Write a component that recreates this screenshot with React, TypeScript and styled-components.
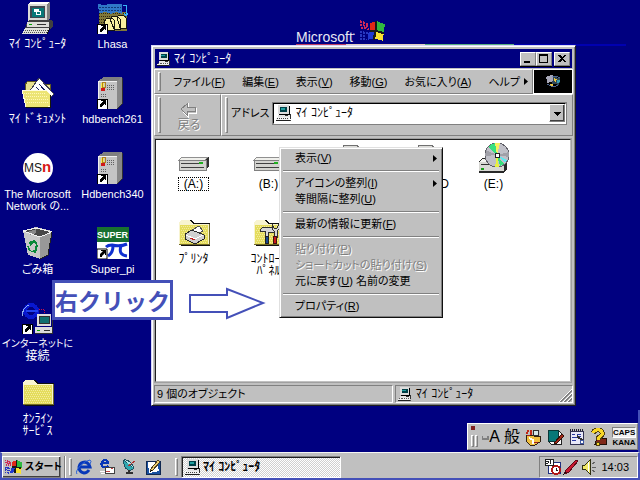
import React from "react";
import styled, { createGlobalStyle, css } from "styled-components";

const navy = "#000080";
const face = "#c0c0c0";
const shade = "#808080";
const pen = "#4450b8";

const raised = css`
  border: 1px solid;
  border-color: #fff ${shade} ${shade} #fff;
`;
const sunken = css`
  border: 1px solid;
  border-color: ${shade} #fff #fff ${shade};
`;

const GlobalStyle = createGlobalStyle`
  * { box-sizing: border-box; }
  body {
    margin: 0;
    background: ${navy};
    color: #000;
    font: 12px/16px "Liberation Sans", "Noto Sans CJK JP", sans-serif;
    font-feature-settings: "palt";
  }
  button, select {
    font: inherit;
    font-feature-settings: inherit;
    color: inherit;
    margin: 0;
    padding: 0;
    border: 0;
    background: none;
    border-radius: 0;
  }
  svg { display: block; flex: none; }
`;

const Screen = styled.div`
  min-height: 100vh;
  display: flex;
  flex-direction: column;
`;

const Desktop = styled.main`
  flex: 1;
  position: relative;
  overflow: hidden;
  &::after {
    content: "";
    position: absolute;
    right: 0;
    bottom: 0;
    width: 2px;
    height: 42px;
    background: ${pen};
  }
`;

const DesktopIcons = styled.div`
  display: grid;
  grid-template-rows: repeat(6, 75px);
  grid-auto-columns: 75px;
  grid-auto-flow: column;
  justify-content: start;
`;

const Shortcut = styled.button<{ $ink?: string }>`
  display: flex;
  flex-direction: column;
  align-items: center;
  gap: 4px;
  padding-top: 2px;
  color: ${(p) => p.$ink ?? "#000"};
  white-space: nowrap;
  line-height: 12px;
  text-align: center;
`;

const Caption = styled.span<{ $focused?: boolean; $end?: boolean }>`
  padding: ${(p) => (p.$focused ? "0 5px" : p.$end ? "0 7px" : "0")};
  align-self: ${(p) => (p.$end ? "flex-end" : "center")};
  outline: ${(p) => (p.$focused ? "1px dotted #000" : "none")};
`;

const Line = styled.span<{ $size?: number }>`
  display: block;
  font-size: ${(p) => p.$size ?? 12}px;
`;

const Brand = styled.div`
  position: absolute;
  left: 296px;
  top: 18px;
  width: 330px;
  display: grid;
  grid-template-columns: 64px 1fr;
  align-items: end;
  color: #e8e8f4;
  font-size: 14px;
  line-height: 13px;
  sup { font-size: 6px; line-height: 6px; }
`;

const Rainbow = styled.div`
  grid-column: 1 / -1;
  height: 2px;
  background: linear-gradient(90deg, #c04060 0 15%, #e0d0c0 15% 39%, #58b080 39% 66%, #0000b0 66%);
`;

const Window = styled.section`
  position: absolute;
  left: 151px;
  top: 45px;
  width: 425px;
  padding: 2px;
  background: ${face};
  border: 1px solid;
  border-color: #d8d8f8 #202020 #202020 #d8d8f8;
  box-shadow: inset 1px 1px #fff, inset -1px -1px ${shade};
`;

const TitleBar = styled.header`
  display: flex;
  align-items: center;
  gap: 3px;
  height: 19px;
  margin: 1px;
  padding: 0 2px;
  background: ${navy};
  color: #fff;
`;

const Title = styled.h1`
  flex: 1;
  margin: 0;
  font: inherit;
`;

const CaptionButtons = styled.div`
  display: flex;
  button:last-child { margin-left: 2px; }
`;

const CaptionButton = styled.button`
  ${raised}
  width: 16px;
  height: 14px;
  display: grid;
  place-items: center;
  background: ${face};
  color: #000;
  box-shadow: 0 1px #000;
`;

const MenuRow = styled.div`
  display: flex;
  height: 25px;
`;

const MenuBar = styled.nav`
  ${raised}
  flex: 1;
  display: flex;
  align-items: center;
  gap: 17px;
  padding-left: 3px;
  font-size: 11px;
`;

const Throbber = styled.div`
  width: 40px;
  display: grid;
  place-items: center;
  background: #000;
  border: 1px solid #fff;
`;

const Grip = styled.span<{ $first?: boolean }>`
  ${raised}
  flex: none;
  width: 3px;
  align-self: stretch;
  margin: 2px ${(p) => (p.$first ? -5 : 0)}px 2px 0;
`;

const MenuItem = styled.button`
  display: flex;
  align-items: center;
  gap: 4px;
  white-space: nowrap;
`;

const ToolRow = styled.div`
  display: flex;
  height: 42px;
`;

const Band = styled.div<{ $grow?: boolean }>`
  ${raised}
  display: flex;
  align-items: center;
  flex: ${(p) => (p.$grow ? "1" : "0 0 67px")};
  gap: 3px;
  padding: 0 6px 0 3px;
`;

const BackButton = styled.button`
  flex: 1;
  display: flex;
  flex-direction: column;
  align-items: center;
  color: ${shade};
  text-shadow: 1px 1px #fff;
  line-height: 14px;
  padding-top: 4px;
`;

const AddressBox = styled.div`
  flex: 1;
  display: flex;
  align-items: center;
  height: 21px;
  margin-bottom: 4px;
  padding-left: 2px;
  background: #fff;
  border: 1px solid;
  border-color: #000 #fff #fff #000;
  outline: 1px solid ${shade};
`;

const AddressSelect = styled.select`
  flex: 1;
  appearance: none;
  padding-left: 4px;
  outline: none;
`;

const AddressLabel = styled.label`
  margin-bottom: 4px;
  font-size: 11px;
  white-space: nowrap;
`;

const DropArrow = styled.span`
  ${raised}
  display: grid;
  place-items: center;
  width: 16px;
  height: 18px;
  background: ${face};
  box-shadow: inset -1px -1px #404040;
`;

const FileView = styled.div`
  display: grid;
  grid-template-columns: repeat(auto-fill, 75px);
  grid-auto-rows: 75px;
  align-content: start;
  min-height: 245px;
  margin: 2px 1px 0 0;
  background: #fff;
  border: 2px solid;
  border-color: #202020 ${face} ${face} #202020;
  outline: 1px solid #a0a0a0;
  outline-offset: -1px;
`;

const StatusBar = styled.footer`
  display: grid;
  grid-template-columns: 57% 1fr;
  gap: 2px;
  padding-top: 2px;
`;

const StatusPane = styled.div`
  ${sunken}
  display: flex;
  align-items: center;
  gap: 4px;
  height: 18px;
  padding-left: 2px;
  svg:last-child:not(:first-child) { margin-left: auto; align-self: end; }
`;

const StatusText = styled.span`
  font-size: 11px;
`;

const ContextMenu = styled.div`
  position: absolute;
  left: 279px;
  top: 147px;
  width: 164px;
  padding: 2px 3px 3px;
  background: ${face};
  border: 1px solid;
  border-color: #e0e0e0 #101010 #101010 #e0e0e0;
  box-shadow: inset 1px 1px #fff, inset -1px -1px ${shade};
  font-size: 11px;
`;

const Command = styled.button`
  display: flex;
  align-items: center;
  justify-content: space-between;
  width: 100%;
  height: 16px;
  padding: 0 2px 0 12px;
  white-space: nowrap;
  text-align: left;
  &:disabled {
    color: ${shade};
    text-shadow: 1px 1px #fff;
  }
`;

const Rule = styled.hr`
  height: 2px;
  margin: 4px 0 3px;
  border: 0;
  border-top: 1px solid ${shade};
  border-bottom: 1px solid #fff;
`;

const Note = styled.div`
  position: absolute;
  left: 52px;
  top: 280px;
  width: 121px;
  height: 40px;
  display: grid;
  place-items: center;
  background: #fff;
  border: 3px solid ${pen};
  color: ${pen};
  font: bold 23px/34px "Noto Sans CJK JP", sans-serif;
  white-space: nowrap;
`;

const NoteArrow = styled.svg`
  position: absolute;
  left: 188px;
  top: 286px;
`;

const ImeBar = styled.div`
  ${raised}
  position: absolute;
  right: 2px;
  bottom: 2px;
  z-index: 1;
  display: flex;
  align-items: center;
  gap: 4px;
  height: 27px;
  padding: 0 1px 0 3px;
  background: ${face};
  font-size: 16px;
`;

const ImeHandle = styled.div`
  display: grid;
  grid-template-columns: 3px 3px;
  gap: 1px;
  span { ${raised} height: 12px; }
  i { grid-column: 1 / -1; width: 4px; height: 4px; background: #802020; margin-bottom: 4px; }
`;

const ImeTool = styled.button`
  display: flex;
  align-items: center;
`;

const KeyLocks = styled.div`
  width: 24px;
  font: bold 8px/9px "Liberation Sans", sans-serif;
  text-align: center;
  span { display: block; }
  span:first-child { ${sunken} background: #f0f0f0; }
`;

const Taskbar = styled.footer`
  display: flex;
  align-items: stretch;
  gap: 3px;
  height: 28px;
  padding: 3px 0 0;
  background: ${face};
  border: 2px solid ${pen};
  border-top: 1px solid #f4f4f4;
`;

const StartButton = styled.button`
  ${raised}
  display: flex;
  align-items: center;
  gap: 2px;
  width: 59px;
  padding-left: 2px;
  font-size: 10px;
  font-weight: bold;
  white-space: nowrap;
  box-shadow: inset -1px -1px #404040;
`;

const QuickLaunch = styled.div`
  display: flex;
  align-items: center;
  gap: 7px;
  width: 97px;
  padding-left: 1px;
`;

const TaskButton = styled.button`
  ${sunken}
  display: flex;
  align-items: center;
  gap: 2px;
  width: 160px;
  padding-left: 3px;
  font-weight: bold;
  background: repeating-conic-gradient(#fff 0 25%, #d0d0d0 0 50%) 0 0 / 2px 2px;
  box-shadow: inset 1px 1px #202020;
`;

const Divider = styled.span`
  ${sunken}
  width: 2px;
  border-width: 0 1px;
`;

const Tray = styled.div`
  ${sunken}
  display: flex;
  align-items: center;
  gap: 2px;
  width: 99px;
  margin-left: auto;
  padding: 0 8px 0 5px;
  font-size: 11px;
  time { margin-left: auto; }
`;

type Size = { size?: number };

const Pixels = ({ size = 32, grid = 32, children }: { size?: number; grid?: number; children: React.ReactNode }) => (
  <svg width={size} height={size} viewBox={`0 0 ${grid} ${grid}`} shapeRendering="crispEdges" aria-hidden="true">
    {children}
  </svg>
);

const LinkBadge = () => (
  <>
    <path d="M0 22h10v10h-10z" fill="#fff" stroke="#000" />
    <path d="M3 29v-2l3-3h-2v-1h5v5h-1v-2l-3 3v1h-2z" fill="#000" />
  </>
);

const PcIcon = () => (
  <Pixels>
    <path d="M6 2l3-2h19v17l-3 2h-19z" fill="#808080" />
    <path d="M6 2h19v17h-19z" fill="#dcdcd8" />
    <path d="M6 2l3-2h19l-3 2z" fill="#fff" />
    <path d="M8 4h15v12h-15z" fill="#404850" />
    <path d="M10 6h12v9h-12z" fill="#087878" />
    <path d="M12 7h5v3h-5zM14 9h5v4h-5z" fill="#fff" />
    <path d="M15 10h3v2h-3z" fill="#087878" />
    <path d="M5 20l2-2h21l3 1v5l-3 3h-25z" fill="#404040" />
    <path d="M5 20h22v5h-22z" fill="#dcdcd8" />
    <path d="M15 22h9v1h-9z" fill="#303030" />
    <path d="M7 22h3v1h-3z" fill="#00a000" />
    <path d="M3 26h25l-3 6h-25z" fill="#e0e0dc" />
    <path d="M3 28h23M2 30h23" stroke="#505050" strokeDasharray="1 1" />
    <path d="M28 26l-3 6h-24" stroke="#101010" fill="none" />
  </Pixels>
);

const MiniPc = ({ size = 16 }: Size) => (
  <Pixels size={size} grid={16}>
    <path d="M3 1h11v9h-11z" fill="#000" />
    <path d="M2 0h11v9h-11z" fill="#dcdcdc" />
    <path d="M4 2h7v5h-7z" fill="#004048" />
    <path d="M5 3h4v2h-4z" fill="#20a0a0" />
    <path d="M2 10h13v2h-13z" fill="#e4e4e4" />
    <path d="M14 9h1v5h-1zM9 10h3v1h-3z" fill="#303030" />
    <path d="M1 12h13l-1 3h-13z" fill="#f0f0f0" />
    <path d="M1 13h12M0 15h15" stroke="#404040" strokeDasharray="1 1" />
    <path d="M0 15h14v1h-14z" fill="#202020" />
  </Pixels>
);

const FolderBody = () => (
  <>
    <path d="M2 6h2l2-3h8l2 3h16v23h-29z" fill="#101010" />
    <path d="M1 6l2-3h9l3 4h16v20h-30z" fill="#f8f4d0" />
    <path d="M2 8h28v19h-28z" fill="#e4dc5c" />
    <path d="M3 9h26M3 13h26M3 17h26M3 21h26M3 25h26" stroke="#f4eca0" strokeDasharray="1 1" />
    <path d="M4 11h26M4 15h26M4 19h26M4 23h26" stroke="#f4eca0" strokeDasharray="1 1" />
    <path d="M1 27h30v-20" fill="none" stroke="#706828" />
  </>
);

const FolderIcon = () => <Pixels><FolderBody /></Pixels>;

const DocumentsIcon = () => (
  <Pixels>
    <path d="M3 8l3-4h8l3 3h11v21h-24z" fill="#e8e090" stroke="#605820" />
    <path d="M7 15l10-14 15 16-10 10z" fill="#fff" stroke="#404050" />
    <path d="M12 13l8 8M14 10l9 10M17 7l9 10" stroke="#182060" />
    <path d="M0 13h24l4 4v12l-2 1h-22z" fill="#ece474" stroke="#fffce0" />
    <path d="M2 16h22M4 19h22M3 22h23M5 25h22" stroke="#fff8b8" strokeDasharray="1 1" />
    <path d="M4 30h24v-12" fill="none" stroke="#181808" />
  </Pixels>
);

const LhasaIcon = () => (
  <Pixels>
    <path d="M2 10h28v19h-28z" fill="#807838" />
    <path d="M2 11h28M2 14h28M2 17h28M2 20h28M2 23h28" stroke="#302810" strokeDasharray="1 1" />
    <path d="M1 2l6 1 5-1h13v10l-6-2-5 2-5-2-7 1z" fill="#3078c8" />
    <path d="M2 5h22M2 8h22" stroke="#103878" strokeDasharray="2 1" />
    <path d="M26 3h3v10M27 11l2 3 2-3" fill="none" stroke="#38b0f8" />
    <path d="M7 20l3-4h5l2 2v10h-10zM13 17l3-3h4l3 3v10h-6zM20 15l2-2h4l3 3v10h-6z" fill="#f8f0a0" stroke="#181810" />
    <LinkBadge />
  </Pixels>
);

const TowerIcon = () => (
  <Pixels>
    <path d="M1 4l6-4h18l-5 4z" fill="#808080" />
    <path d="M1 4h19v28h-19z" fill="#c4c4c4" />
    <path d="M20 4l5-4v27l-5 5z" fill="#888" />
    <path d="M1 31v-27h19" fill="none" stroke="#f0f0f0" />
    <path d="M4 6h3v5h-3z" fill="#f8e850" />
    <path d="M4 11h4v3h-4z" fill="#d01818" />
    <path d="M5 5h3v5h-3z" stroke="#b08020" fill="none" />
    <path d="M10 8h8M10 10h8M10 12h8M4 17h5M4 19h5" stroke="#606060" strokeDasharray="1 1" />
    <path d="M25 1v26l-5 5" fill="none" stroke="#303030" />
    <LinkBadge />
  </Pixels>
);

const MsnIcon = () => (
  <svg width="32" height="32" viewBox="0 0 32 32" aria-hidden="true">
    <circle cx="16" cy="16" r="15" fill="#fff" />
    <text x="2" y="20" fontFamily="Liberation Sans" fontSize="12" fill="#181818">MS</text>
    <text x="20" y="20" fontFamily="Liberation Sans" fontSize="15" fontWeight="bold" fill="#d81818">n</text>
  </svg>
);

const BinIcon = () => (
  <Pixels>
    <path d="M1 4l13-4 16 4-4 24-8 4-12-4z" fill="#c8c8c8" />
    <path d="M1 4l13-3 16 4-13 5z" fill="#484848" />
    <path d="M6 5l8-3v4l-6 2z" fill="#888" />
    <path d="M18 10l12-5-4 23-8 4z" fill="#989898" />
    <path d="M1 4l17 6 12-5M1 4l13-3 16 4" fill="none" stroke="#f0f0f0" />
    <path d="M7 15l5-2 4 3-2 1-3-1-3 3zM6 18l3 6 4-1v3l-6-2-2-5zM16 18l-2 8-2-1 1-3 1-5z" fill="#088838" />
    <path d="M30 5l-4 23-8 4" fill="none" stroke="#202020" />
  </Pixels>
);

const SuperPiIcon = () => (
  <svg width="32" height="32" viewBox="0 0 32 32" aria-hidden="true">
    <path d="M0 0h32v32h-32z" fill="#fff" />
    <path d="M0 0h32v15h-32z" fill="#187030" />
    <text x="0" y="11" fontFamily="Liberation Sans" fontSize="9" fontWeight="bold" fill="#fff">SUPER</text>
    <path d="M9 20q2-2 6-2 8 2 15-1" fill="none" stroke="#1030d0" strokeWidth="3" />
    <path d="M16 19q0 7-5 10M24 19q-3 9 6 10" fill="none" stroke="#1030d0" strokeWidth="3" />
    <LinkBadge />
  </svg>
);

const ConnectIcon = () => (
  <Pixels>
    <circle cx="9" cy="9" r="6" fill="none" stroke="#0818d0" strokeWidth="4" />
    <path d="M4 9h12" stroke="#2040f0" strokeWidth="2" />
    <path d="M0 14q1-9 7-11" fill="none" stroke="#90b0f0" />
    <path d="M17 7h5v5" fill="none" stroke="#d01040" strokeDasharray="1 1" />
    <path d="M15 12h14v12h-14z" fill="#dcdcdc" />
    <path d="M17 14h10v7h-10z" fill="#107070" stroke="#303030" />
    <path d="M13 25h17v6h-17z" fill="#dcdcdc" />
    <path d="M30 13v18h-17M22 28h6" fill="none" stroke="#303030" />
    <path d="M15 28h3" stroke="#00a000" />
    <LinkBadge />
  </Pixels>
);

const DriveIcon = () => (
  <Pixels>
    <path d="M2 18l3-3h26v9l-3 5h-25z" fill="#303030" />
    <path d="M1 18l3-3h26l-3 3z" fill="#f0f0ec" stroke="#909090" />
    <path d="M1 18h27v10h-27z" fill="#d4d4d0" stroke="#808080" />
    <path d="M3 21h18M3 25h23" stroke="#404040" />
    <path d="M21 20h4v2h-4z" fill="#20b020" />
  </Pixels>
);

const HardDiskIcon = () => (
  <Pixels>
    <path d="M16 3h13l2 3v8h-16v-8z" fill="#dcdcd8" stroke="#707070" />
  </Pixels>
);

const CdIcon = () => (
  <Pixels>
    <path d="M1 19l4-3h24v11l-3 4h-25z" fill="#282828" />
    <path d="M1 20h25v9h-25z" fill="#d8d8d4" />
    <path d="M1 20l4-3h23l-3 3z" fill="#f4f4f0" />
    <path d="M3 22h22" stroke="#303030" />
    <path d="M3 26h3v2h-3z" fill="#18a018" />
    <circle cx="19" cy="13" r="12" fill="#c0c0c8" stroke="#606068" />
    <path d="M19 13l-9-8 4-3 3-1z" fill="#38e080" />
    <path d="M19 13l-2-12h5z" fill="#f8f060" />
    <path d="M19 13l2 12h-4z" fill="#e8f040" />
    <path d="M19 13l7 9-4 2z" fill="#38e080" />
    <path d="M19 13l10 5-2 3z" fill="#60e8f0" />
    <path d="M19 13l-12 1 1-6zM19 13l12-3v5z" fill="#a0a0a8" />
    <path d="M17 11h4v4h-4z" fill="#fff" stroke="#202020" />
  </Pixels>
);

const PrinterFolderIcon = () => (
  <Pixels>
    <FolderBody />
    <path d="M14 13l7-4 4 5-8 4z" fill="#fff" stroke="#505050" />
    <path d="M7 17l7-4 12 5v4l-9 5-10-5z" fill="#d0d0d0" stroke="#282828" />
    <path d="M8 18l9 4 8-4" fill="none" stroke="#fff" />
    <path d="M12 21l5 2" stroke="#c02020" />
  </Pixels>
);

const ControlFolderIcon = () => (
  <Pixels>
    <FolderBody />
    <path d="M7 13l3-3h9l2 3v2h-6v4h-3v-5h-5z" fill="#d8d8d8" stroke="#303030" />
    <path d="M12 19h3v7h-3z" fill="#184890" stroke="#202020" />
    <path d="M19 7v5l2 2v6h3v-6l2-2v-5l-2 4h-3z" fill="#d8d8d8" stroke="#303030" />
    <path d="M20 19h3v7h-3z" fill="#c81818" stroke="#401010" />
  </Pixels>
);

const FlagIcon = ({ size = 18 }: Size) => (
  <Pixels size={size} grid={24}>
    <path d="M9 5l6-2 0 8-6 1z" fill="#e02818" />
    <path d="M16 3l7 3-1 7-7-2z" fill="#30b840" />
    <path d="M8 13l6-1-1 7-6 1z" fill="#2038d0" />
    <path d="M15 12l7 2-1 7-7-2z" fill="#f8e030" />
    <path d="M0 3l8 3M0 6l8 2M1 9l7 1" stroke="#d02858" strokeWidth="2" strokeDasharray="2 1" />
    <path d="M0 13l7 1M0 16l6 1M0 19l6 1" stroke="#2838c0" strokeWidth="2" strokeDasharray="2 1" />
    <path d="M15 3v8M14 12l-1 8M9 12h6l7 2" stroke="#181818" strokeWidth="2" fill="none" />
  </Pixels>
);

const ThrobberIcon = () => (
  <Pixels size={18} grid={24}>
    <path d="M3 5l8-3 2 8-9 4z" fill="#a8a8b8" />
    <path d="M12 5l10 2-2 9-9-2z" fill="#304858" />
    <path d="M14 7l3 1-1 4-3-1zM9 14l3 1-1 3-3-1z" fill="#f0c840" />
    <path d="M18 9l3 1-1 4-3-1z" fill="#38a0b8" />
    <path d="M4 15l7 3 7-1M10 4l11 2" stroke="#6888c0" fill="none" />
  </Pixels>
);

const BrowserIcon = () => (
  <svg width="16" height="16" viewBox="0 0 16 16" aria-hidden="true">
    <path d="M13 11q-2 3-5 3-5-1-5-6 1-5 6-5 4 1 5 5h-10" fill="none" stroke="#0838b8" strokeWidth="3" />
    <path d="M1 15q-2-2 3-8 6-6 10-6 2 1 0 4" fill="none" stroke="#2860d8" />
  </svg>
);

const MailIcon = () => (
  <Pixels size={16} grid={16}>
    <path d="M9 7q-3 3-6 0-2-4 2-6 4 0 4 3h-6" fill="none" stroke="#0838b8" strokeWidth="2" />
    <path d="M6 8h9v6h-9z" fill="#fff" stroke="#404040" />
    <path d="M7 12h4M12 9h2" stroke="#c04040" />
    <path d="M1 12h5M2 14h4" stroke="#fff" />
  </Pixels>
);

const ChannelIcon = () => (
  <Pixels size={16} grid={16}>
    <path d="M2 1l10 8q-2 3-6 2-5-3-4-10z" fill="#30a8b0" stroke="#205060" />
    <path d="M2 1q6-1 10 8" fill="#b0e8e8" stroke="#205060" />
    <path d="M6 7l7-5" stroke="#b03030" />
    <path d="M7 11v3h-3M7 14h4" fill="none" stroke="#303030" strokeWidth="2" />
  </Pixels>
);

const ShowDesktopIcon = () => (
  <Pixels size={16} grid={16}>
    <path d="M1 2h14v13h-14z" fill="#1850a0" stroke="#102850" />
    <path d="M3 3l9 0 2 9-10 2z" fill="#fff" />
    <path d="M5 11l8-10 2 2-8 9z" fill="#f0d070" stroke="#504020" />
    <path d="M4 13l3-1-1-1z" fill="#000" />
  </Pixels>
);

const InputModeIcon = () => (
  <Pixels size={7} grid={7}>
    <path d="M0 3v3h6v-3" fill="none" stroke={shade} strokeWidth="2" />
  </Pixels>
);

const PaletteIcon = () => (
  <Pixels size={18} grid={18}>
    <path d="M2 7l8 1 6 0v6l-5 3h-5l-4-4z" fill="#f0c040" stroke="#302010" />
    <path d="M5 10l4 2v4" fill="none" stroke="#fff" strokeWidth="2" />
    <path d="M3 6l1-4M7 7v-5" stroke="#c02818" strokeWidth="2" />
    <circle cx="12" cy="5" r="3" fill="#d8e8e8" stroke="#303030" />
    <path d="M3 7h3M10 14h4" stroke="#a02020" />
  </Pixels>
);

const BookIcon = () => (
  <Pixels size={18} grid={18}>
    <path d="M2 2h10l3 3v11h-10l-3-3z" fill="#f8f8f8" stroke="#202020" />
    <path d="M2 2h10v11h-10z" fill="#087878" stroke="#083838" />
    <path d="M8 15l8-9 2 2-8 8z" fill="#a02818" stroke="#301008" />
  </Pixels>
);

const PadIcon = () => (
  <Pixels size={18} grid={18}>
    <path d="M2 3h13v13h-13z" fill="#e8e8f8" stroke="#303050" />
    <path d="M2 2h14" stroke="#202030" strokeWidth="2" strokeDasharray="1 1" />
    <path d="M4 6h3M9 6h4M4 9h5M4 12h4M11 8h2" stroke="#2838a0" />
    <path d="M9 8l6 5" stroke="#303030" strokeWidth="2" />
    <circle cx="14" cy="14" r="2" fill="#fff" stroke="#4058a0" />
  </Pixels>
);

const HelpIcon = () => (
  <Pixels size={18} grid={18}>
    <path d="M7 10h9v6h-11z" fill="#802818" stroke="#201008" />
    <path d="M3 5q2-4 7-3 4 3 1 6l-3 2v2" fill="none" stroke="#504010" strokeWidth="5" />
    <path d="M3 5q2-4 7-3 4 3 1 6l-3 2v2" fill="none" stroke="#f8d828" strokeWidth="3" />
    <path d="M6 14h3v3h-3z" fill="#f8d828" stroke="#504010" />
  </Pixels>
);

const SchedulerIcon = () => (
  <Pixels size={16} grid={16}>
    <path d="M3 3h12v11h-12z" fill="#fff" stroke="#203080" />
    <path d="M0 0h8v6h-8z" fill="#fff" stroke="#202020" />
    <path d="M1 2h2v2M5 1v4M3 4h-2" fill="none" stroke="#202020" />
    <circle cx="11" cy="11" r="4" fill="#fff" stroke="#b01818" strokeWidth="2" />
    <path d="M11 9v2h2" fill="none" stroke="#202020" />
  </Pixels>
);

const PenIcon = () => (
  <Pixels size={16} grid={16}>
    <path d="M1 15l2-4 10-10 2 1-9 11z" fill="#c81830" stroke="#600818" />
    <path d="M0 16l3-3" stroke="#101010" />
  </Pixels>
);

const SpeakerIcon = () => (
  <Pixels size={16} grid={16}>
    <path d="M1 6h3l5-5v14l-5-5h-3z" fill="#f0e868" stroke="#303010" />
    <path d="M7 3v10" stroke="#fff" />
    <path d="M11 5l3-2M11 8h4M11 11l3 2" stroke="#606060" />
  </Pixels>
);

const Triangle = () => (
  <svg width="4" height="7" viewBox="0 0 4 7" aria-hidden="true"><path d="M0 0l4 3.5l-4 3.5z" /></svg>
);

type TextLine = { text: string; size?: number };

const desktopItems: { icon: React.ReactNode; lines: TextLine[] }[] = [
  { icon: <PcIcon />, lines: [{ text: "ﾏｲ ｺﾝﾋﾟｭｰﾀ" }] },
  { icon: <DocumentsIcon />, lines: [{ text: "ﾏｲ ﾄﾞｷｭﾒﾝﾄ" }] },
  { icon: <MsnIcon />, lines: [{ text: "The Microsoft", size: 11 }, { text: "Network の...", size: 11 }] },
  { icon: <BinIcon />, lines: [{ text: "ごみ箱", size: 11 }] },
  { icon: <ConnectIcon />, lines: [{ text: "インターネットに", size: 10 }, { text: "接続" }] },
  { icon: <FolderIcon />, lines: [{ text: "ｵﾝﾗｲﾝ" }, { text: "ｻｰﾋﾞｽ" }] },
  { icon: <LhasaIcon />, lines: [{ text: "Lhasa", size: 11 }] },
  { icon: <TowerIcon />, lines: [{ text: "hdbench261", size: 11 }] },
  { icon: <TowerIcon />, lines: [{ text: "Hdbench340", size: 11 }] },
  { icon: <SuperPiIcon />, lines: [{ text: "Super_pi", size: 11 }] },
];

const files: { icon: React.ReactNode; lines: string[]; focused?: boolean; end?: boolean }[] = [
  { icon: <DriveIcon />, lines: ["(A:)"], focused: true },
  { icon: <DriveIcon />, lines: ["(B:)"] },
  { icon: <HardDiskIcon />, lines: [] },
  { icon: <HardDiskIcon />, lines: ["D"], end: true },
  { icon: <CdIcon />, lines: ["(E:)"] },
  { icon: <PrinterFolderIcon />, lines: ["ﾌﾟﾘﾝﾀ"] },
  { icon: <ControlFolderIcon />, lines: ["ｺﾝﾄﾛｰﾙ", "ﾊﾟﾈﾙ"] },
];

const menus = [["ファイル", "F"], ["編集", "E"], ["表示", "V"], ["移動", "G"], ["お気に入り", "A"]];

type Entry = { text: string; hot: string; tail?: string; sub?: boolean; off?: boolean };

const commandGroups: Entry[][] = [
  [{ text: "表示", hot: "V", sub: true }],
  [{ text: "アイコンの整列", hot: "I", sub: true }, { text: "等間隔に整列", hot: "U" }],
  [{ text: "最新の情報に更新", hot: "F" }],
  [
    { text: "貼り付け", hot: "P", off: true },
    { text: "ショートカットの貼り付け", hot: "S", off: true },
    { text: "元に戻す", hot: "U", tail: " 名前の変更" },
  ],
  [{ text: "プロパティ", hot: "R" }],
];

export default function App() {
  return (
    <Screen>
      <GlobalStyle />
      <Desktop>
        <DesktopIcons>
          {desktopItems.map((d) => (
            <Shortcut key={d.lines[0].text} $ink="#fff">
              {d.icon}
              <Caption>
                {d.lines.map((l) => <Line key={l.text} $size={l.size}>{l.text}</Line>)}
              </Caption>
            </Shortcut>
          ))}
        </DesktopIcons>

        <Brand>
          <span>Microsoft<sup>•</sup></span>
          <FlagIcon size={26} />
          <Rainbow />
        </Brand>

        <Window>
          <TitleBar>
            <MiniPc size={14} />
            <Title>ﾏｲ ｺﾝﾋﾟｭｰﾀ</Title>
            <CaptionButtons>
              <CaptionButton aria-label="最小化">
                <Pixels size={10} grid={10}><path d="M1 7h6v2h-6z" /></Pixels>
              </CaptionButton>
              <CaptionButton aria-label="最大化">
                <Pixels size={10} grid={10}><path d="M0 0h9v9h-9zM1 2v6h7v-6z" fillRule="evenodd" /></Pixels>
              </CaptionButton>
              <CaptionButton aria-label="閉じる">
                <Pixels size={10} grid={10}><path d="M1 1h2l2 2 2-2h2l-3 3.5 3 3.500h-2l-2-2-2 2h-2l3-3.500z" /></Pixels>
              </CaptionButton>
            </CaptionButtons>
          </TitleBar>

          <MenuRow>
            <MenuBar>
              <Grip $first />
              {menus.map(([name, key]) => (
                <MenuItem key={key}>
                  <span>{name}(<u>{key}</u>)</span>
                </MenuItem>
              ))}
              <MenuItem>ヘルプ<Triangle /></MenuItem>
            </MenuBar>
            <Throbber><ThrobberIcon /></Throbber>
          </MenuRow>

          <ToolRow>
            <Band>
              <Grip />
              <BackButton disabled>
                <Pixels size={16} grid={16}>
                  <path d="M1 8l6-6v4h8v5h-8v4z" fill="none" stroke="#fff" />
                  <path d="M0 7l6-5v3h8v4h-8v4z" fill={face} stroke={shade} />
                </Pixels>
                戻る
              </BackButton>
            </Band>
            <Band $grow>
              <Grip />
              <AddressLabel htmlFor="address">アドレス</AddressLabel>
              <AddressBox>
                <MiniPc />
                <AddressSelect id="address" defaultValue="pc">
                  <option value="pc">ﾏｲ ｺﾝﾋﾟｭｰﾀ</option>
                </AddressSelect>
                <DropArrow>
                  <Pixels size={7} grid={7}><path d="M0 2h7l-3 4h-1z" /></Pixels>
                </DropArrow>
              </AddressBox>
            </Band>
          </ToolRow>

          <FileView>
            {files.map((f, i) => (
              <Shortcut key={i}>
                {f.icon}
                <Caption $focused={f.focused} $end={f.end}>
                  {f.lines.map((l) => <Line key={l}>{l}</Line>)}
                </Caption>
              </Shortcut>
            ))}
          </FileView>

          <StatusBar>
            <StatusPane><StatusText>9 個のオブジェクト</StatusText></StatusPane>
            <StatusPane>
              <MiniPc size={14} />
              ﾏｲ ｺﾝﾋﾟｭｰﾀ
              <Pixels size={13} grid={13}>
                <path d="M1 13l12-12M5 13l8-8M9 13l4-4" stroke={shade} strokeWidth="2" />
                <path d="M0 13l13-13M4 13l9-9M8 13l5-5" stroke="#fff" />
              </Pixels>
            </StatusPane>
          </StatusBar>
        </Window>

        <ContextMenu role="menu">
          {commandGroups.map((group, i) => (
            <React.Fragment key={i}>
              {i > 0 && <Rule />}
              {group.map((c) => (
                <Command key={c.text} role="menuitem" disabled={c.off}>
                  <span>{c.text}(<u>{c.hot}</u>){c.tail}</span>
                  {c.sub && <Triangle />}
                </Command>
              ))}
            </React.Fragment>
          ))}
        </ContextMenu>

        <Note>右クリック</Note>
        <NoteArrow width="78" height="36" viewBox="0 0 78 36" aria-hidden="true">
          <path d="M2 9h37v-6l36 14-36 15v-6h-37z" fill="#fff" stroke={pen} strokeWidth="2" />
        </NoteArrow>

        <ImeBar>
          <ImeHandle><i /><span /><span /></ImeHandle>
          <ImeTool><InputModeIcon />A</ImeTool>
          <ImeTool>般</ImeTool>
          <ImeTool aria-label="パレット"><PaletteIcon /></ImeTool>
          <ImeTool aria-label="辞書"><BookIcon /></ImeTool>
          <ImeTool aria-label="プロパティ"><PadIcon /></ImeTool>
          <ImeTool aria-label="ヘルプ"><HelpIcon /></ImeTool>
          <KeyLocks><span>CAPS</span><span>KANA</span></KeyLocks>
        </ImeBar>
      </Desktop>

      <Taskbar>
        <StartButton><FlagIcon />スタート</StartButton>
        <Divider />
        <Grip />
        <QuickLaunch>
          <BrowserIcon />
          <MailIcon />
          <ChannelIcon />
          <ShowDesktopIcon />
        </QuickLaunch>
        <Grip />
        <TaskButton><MiniPc />ﾏｲ ｺﾝﾋﾟｭｰﾀ</TaskButton>
        <Tray>
          <SchedulerIcon />
          <PenIcon />
          <SpeakerIcon />
          <time>14:03</time>
        </Tray>
      </Taskbar>
    </Screen>
  );
}
